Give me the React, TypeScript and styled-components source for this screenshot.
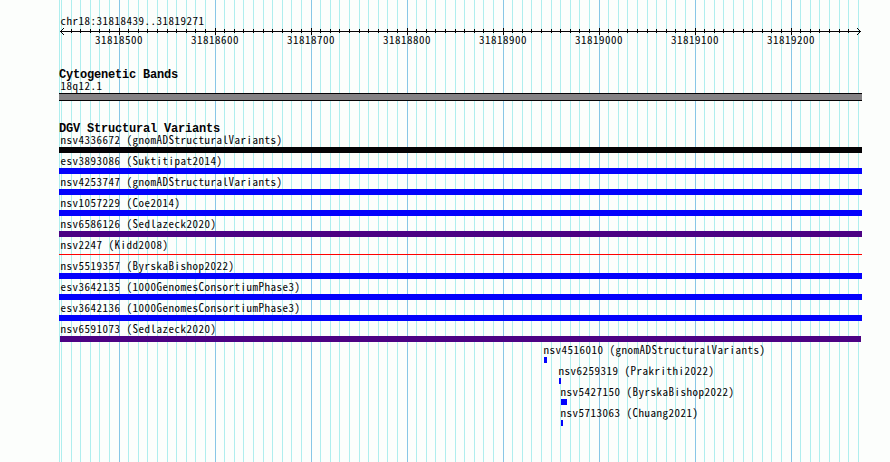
import React from "react";
import styled, { createGlobalStyle } from "styled-components";

const Global = createGlobalStyle`
  body { margin: 0; background: #fcfefc; overflow: hidden; }
`;

const Browser = styled.main`
  position: relative;
  box-sizing: border-box;
  width: 890px;
  height: 462px;
  padding: 15px 28px 0 59px;
  background: #fcfefc;
  color: #040204;
  font-family: "Noto Sans CJK SC", "Liberation Mono", monospace;
  font-feature-settings: "hwid";
  font-size: 11px;
  letter-spacing: 0.5px;
  line-height: 11px;
  white-space: pre;
`;

const Grid = styled.svg`
  position: absolute;
  inset: 0;
  shape-rendering: crispEdges;
`;

const Content = styled.div`
  position: relative;
  display: flex;
  flex-direction: column;
`;

const Label = styled.div<{ $start?: number }>`
  height: 13px;
  padding-left: ${(p) => p.$start ?? 1.5}px;
`;

const Axis = styled.svg`
  display: block;
  height: 7px;
  width: 803px;
  overflow: visible;
  shape-rendering: crispEdges;
`;

const Scale = styled.div`
  display: flex;
  height: 13px;
  padding-left: 12px;
  margin-top: -1px;
`;

const ScaleLabel = styled.span`
  width: 96px;
  text-align: center;
`;

const Heading = styled.h2<{ $gap: number }>`
  margin: ${(p) => p.$gap}px 0 0;
  height: 12px;
  font: bold 12px/15px "Liberation Mono", monospace;
  font-feature-settings: normal;
  letter-spacing: -0.2px;
`;

const Band = styled.div`
  box-sizing: border-box;
  height: 8px;
  background: #848284;
  border: solid #040204;
  border-width: 1px 0;
`;

const Track = styled.div`
  height: 21px;
`;

const Bar = styled.div<{ $start: number; $width: number; $color: string; $thin?: boolean }>`
  width: ${(p) => p.$width}px;
  height: ${(p) => (p.$thin ? 1 : 6)}px;
  margin: ${(p) => (p.$thin ? 2 : 0)}px 0 0 ${(p) => p.$start}px;
  background: ${(p) => p.$color};
`;

const BLUE = "#0402fc";
const PURPLE = "#4c0284";
const marks = Array.from({ length: 84 }, (_, i) => ({
  x: Math.floor((614 + 96 * i) / 10 + 0.001),
  major: i % 10 === 6,
}));

const scale = [500, 600, 700, 800, 900, 1000, 1100, 1200].map((n) => String(31818000 + n));

type Variant = { name: string; color?: string; start?: number; width?: number; thin?: boolean; text?: number };
const variants: Variant[] = [
  { name: "nsv4336672 (gnomADStructuralVariants)", color: "#040204" },
  { name: "esv3893086 (Suktitipat2014)" },
  { name: "nsv4253747 (gnomADStructuralVariants)" },
  { name: "nsv1057229 (Coe2014)" },
  { name: "nsv6586126 (Sedlazeck2020)", color: PURPLE },
  { name: "nsv2247 (Kidd2008)", color: "#ff0000", thin: true },
  { name: "nsv5519357 (ByrskaBishop2022)" },
  { name: "esv3642135 (1000GenomesConsortiumPhase3)" },
  { name: "esv3642136 (1000GenomesConsortiumPhase3)" },
  { name: "nsv6591073 (Sedlazeck2020)", color: PURPLE, start: 1, width: 801 },
  { name: "nsv4516010 (gnomADStructuralVariants)", start: 485, width: 3, text: 484.5 },
  { name: "nsv6259319 (Prakrithi2022)", start: 500, width: 2, text: 499.5 },
  { name: "nsv5427150 (ByrskaBishop2022)", start: 502, width: 6, text: 501.5 },
  { name: "nsv5713063 (Chuang2021)", start: 502, width: 2, text: 501.5 },
];

export default function App() {
  return (
    <>
      <Global />
      <Browser>
        <Grid width="890" height="462">
          <rect x="59" width="1" height="462" fill="#afeeee" />
          {marks.map((m) => (
            <rect key={m.x} x={m.x} width="1" height="462" fill={m.major ? "#87c7e6" : "#afeeee"} />
          ))}
        </Grid>
        <Content>
          <Label>chr18:31818439..31819271</Label>
          <Axis viewBox="59 28 803 7" fill="#040204">
            <rect x="60" y="31" width="801" height="1" />
            {marks.slice(1, -1).map((m) => (
              <rect key={m.x} x={m.x} y={m.major ? 28 : 29} width="1" height={m.major ? 7 : 4} />
            ))}
            {[1, 2, 3].map((d) => (
              <React.Fragment key={d}>
                <rect x={60 + d} y={31 - d} width="1" height="1" />
                <rect x={60 + d} y={31 + d} width="1" height="1" />
                <rect x={860 - d} y={31 - d} width="1" height="1" />
                <rect x={860 - d} y={31 + d} width="1" height="1" />
              </React.Fragment>
            ))}
          </Axis>
          <Scale>
            {scale.map((s) => (
              <ScaleLabel key={s}>{s}</ScaleLabel>
            ))}
          </Scale>
          <Heading $gap={21}>Cytogenetic Bands</Heading>
          <Label>18q12.1</Label>
          <Band />
          <Heading $gap={21}>DGV Structural Variants</Heading>
          {variants.map((v) => (
            <Track key={v.name}>
              <Label $start={v.text}>{v.name}</Label>
              <Bar $start={v.start ?? 0} $width={v.width ?? 803} $color={v.color ?? BLUE} $thin={v.thin} />
            </Track>
          ))}
        </Content>
      </Browser>
    </>
  );
}
